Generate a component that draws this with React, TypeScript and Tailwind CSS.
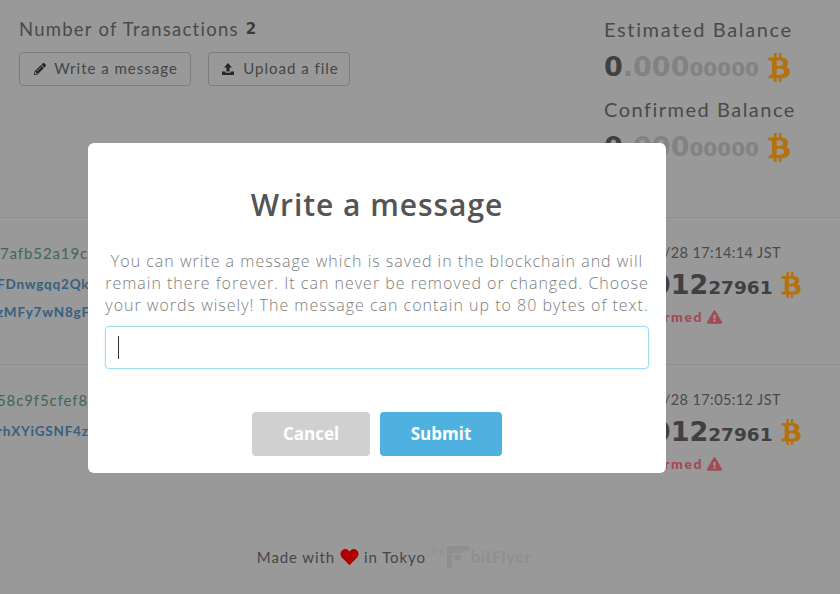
import React from "react";
import { FaBtc, FaExclamationTriangle, FaHeart, FaPencilAlt } from "react-icons/fa";

const Amount = ({ a, b, c, dim }: { a: string; b: string; c: string; dim: boolean }) => (
  <div className="flex items-baseline whitespace-nowrap font-['DejaVu_Sans',sans-serif] font-bold leading-none">
    <span className="text-[27px] text-[#404040]">{a}</span>
    <span className={dim ? "text-[27px] text-[#828282]" : "text-[27px] text-[#404040]"}>{b}</span>
    <span className={dim ? "text-[20px] text-[#828282]" : "text-[18.5px] text-[#404040]"}>{c}</span>
    <FaBtc className={dim ? "ml-[9px] h-[29px] w-[22px] self-center text-[#b5700f]" : "ml-[8px] h-[26px] w-[20px] self-center text-[#b5700f]"} />
  </div>
);

const Row = ({ hash, a1, a2, date, shift }: { hash: string; a1: string; a2: string; date: string; shift: boolean }) => (
  <div className="flex h-[147px] justify-between border-t border-[#8e8e8e]">
    <div className="-ml-[3px] w-[300px] pt-[25px] font-['Lato',sans-serif]">
      <div className={shift ? "whitespace-nowrap text-[15px] leading-[20px] tracking-[0.9px] text-[#42655a]" : "whitespace-nowrap pl-[3px] text-[15px] leading-[20px] tracking-[0.9px] text-[#42655a]"}>{hash}</div>
      <div className="mt-[12px] whitespace-nowrap text-[13.5px] font-bold leading-[18px] tracking-[0.8px] text-[#35607f]">{a1}</div>
      <div className="mt-[10px] whitespace-nowrap text-[13.5px] font-bold leading-[18px] tracking-[0.8px] text-[#35607f]">{a2}</div>
    </div>
    <div className="w-[236px] pt-[26px]">
      <div className="whitespace-nowrap text-[14.5px] leading-[18px] tracking-[0.4px] text-[#4a4a4a]">{date}</div>
      <div className="mt-[9px]">
        <Amount a="0" b=".0012" c="27961" dim={false} />
      </div>
      <div className="mt-[10px] flex items-center whitespace-nowrap text-[14px] font-black leading-[18px] tracking-[1.55px] text-[#a24a55]">
        Unconfirmed
        <FaExclamationTriangle className="ml-[4px] h-[14px] w-[15px]" />
      </div>
    </div>
  </div>
);

export default function App() {
  return (
    <div className="relative h-[594px] w-[840px] overflow-hidden bg-[#999] font-['Lato',sans-serif]">
      <div className="flex h-[217px] justify-between pl-[19px]">
        <div className="pt-[18px]">
          <div className="flex items-center text-[18.5px] leading-[23px] tracking-[1.25px] text-[#4a4a4a]">
            Number of Transactions
            <span className="ml-[7px] font-['DejaVu_Sans',sans-serif] text-[15px] font-bold text-[#3c3c3c]">2</span>
          </div>
          <div className="mt-[11px] flex gap-[17px] text-[15px] tracking-[1px] text-[#454545]">
            <div className="flex h-[34px] w-[172px] items-center justify-center rounded-[4px] border border-[#7d7d7d] pb-[1px] pl-[2px]">
              <FaPencilAlt className="mr-[8px] h-[12px] w-[12px] text-[#262626]" />
              Write a message
            </div>
            <div className="flex h-[34px] w-[142px] items-center justify-center rounded-[4px] border border-[#7d7d7d] pb-[1px] pl-[2px]">
              <svg viewBox="0 0 14 14" className="mr-[8px] h-[14px] w-[14px] text-[#262626]" fill="currentColor">
                <path d="M7 1 11 5.4H8.6V9.6H5.4V5.4H3Z" />
                <path d="M1 9.6H4.4V10.8H9.6V9.6H13V13H1Z" />
              </svg>
              Upload a file
            </div>
          </div>
        </div>
        <div className="w-[236px] pt-[17px]">
          <div className="text-[20px] leading-[24px] tracking-[1.65px] text-[#4a4a4a]">Estimated Balance</div>
          <div className="mt-[12px]">
            <Amount a="0" b=".000" c="00000" dim />
          </div>
          <div className="mt-[15px] text-[20px] leading-[24px] tracking-[1.5px] text-[#4a4a4a]">Confirmed Balance</div>
          <div className="mt-[12px]">
            <Amount a="0" b=".000" c="00000" dim />
          </div>
        </div>
      </div>

      <Row hash="7afb52a19c7e03fd1a" a1="FDnwgqq2QkT7" a2="zMFy7wN8gFi3" date="2017/12/28 17:14:14 JST" shift={false} />
      <Row hash="58c9f5cfef86a2b70d" a1="rhXYiGSNF4zx" a2="" date="2017/12/28 17:05:12 JST" shift />

      <div className="flex items-center justify-center pr-[52px] pt-[35px] text-[15px] leading-[20px] tracking-[0.9px] text-[#464646]">
        Made with
        <FaHeart className="mx-[5px] h-[18px] w-[19px] text-[#b00000]" />
        in Tokyo
        <span className="relative -top-[7px] ml-[6px] text-[11px] italic text-[#8f8f8f]">by</span>
        <svg viewBox="0 0 22 22" className="ml-[2px] h-[22px] w-[22px] text-[#8f8f8f]" fill="currentColor">
          <path d="M0 0H22V5H16V7H5V22H0Z" />
          <path d="M7 9H14V14H7Z" />
        </svg>
        <span className="ml-[2px] text-[17px] font-bold tracking-[0.3px] text-[#8f8f8f]">bitFlyer</span>
      </div>

      <div className="absolute left-[88px] top-[143px] flex h-[330px] w-[578px] flex-col items-center rounded-[6px] bg-white px-[17px] font-['Open_Sans',sans-serif]">
        <h2 className="mt-[42px] text-[30px] font-semibold leading-[40px] tracking-[0.95px] text-[#545454]">Write a message</h2>
        <p className="mt-[25px] w-[560px] text-center text-[16px] font-light leading-[22px] tracking-[1px] text-[#7c7c7c]">
          You can write a message which is saved in the blockchain and will remain there forever. It can never be removed or changed. Choose your words wisely! The message can contain up to 80 bytes of text.
        </p>
        <div className="mt-[10px] flex h-[43px] w-[544px] shrink-0 items-center rounded-[4px] border border-[#a6d9ee] pl-[12px] shadow-[0_0_3px_#d5eef8]">
          <div className="h-[23px] w-px bg-[#333]" />
        </div>
        <div className="mt-[43px] flex gap-[10px] text-[17px] font-bold leading-[24px] text-white">
          <div className="flex h-[44px] w-[118px] items-center justify-center rounded-[4px] bg-[#d0d0d0]">Cancel</div>
          <div className="flex h-[44px] w-[122px] items-center justify-center rounded-[4px] bg-[#4eb1e0]">Submit</div>
        </div>
      </div>
    </div>
  );
}
